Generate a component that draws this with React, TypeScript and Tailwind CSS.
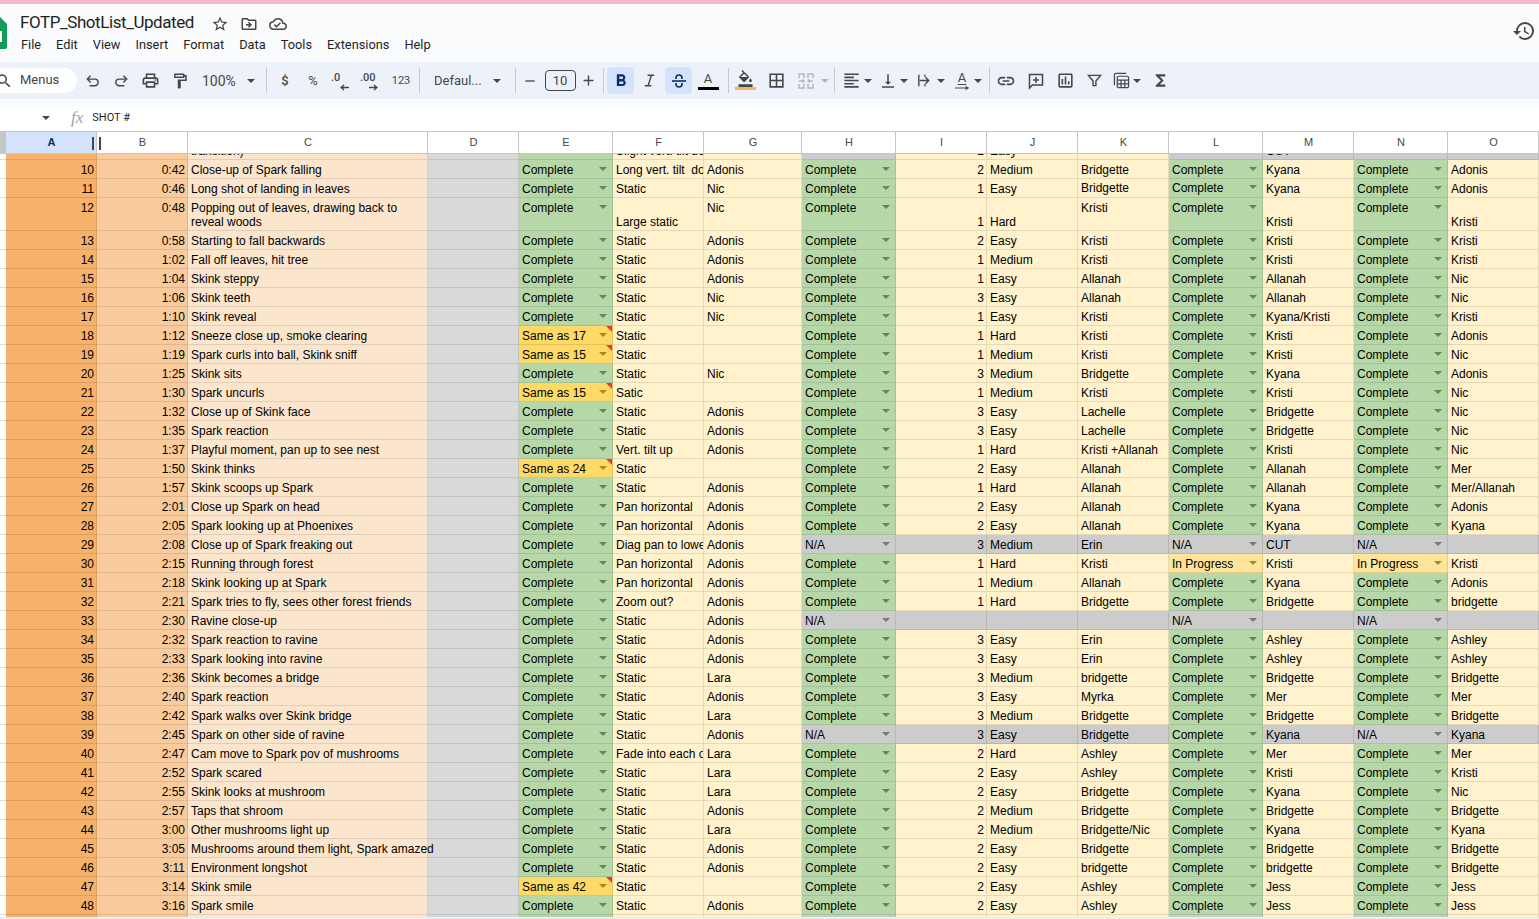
import React from 'react';
import {
  MdOutlinePrint, MdOutlineFormatPaint, MdFormatBold,
  MdFormatColorFill, MdBorderAll, MdFormatAlignLeft, MdVerticalAlignBottom, MdInsertLink,
  MdOutlineInsertChart, MdFunctions, MdHistory, MdOutlineDriveFileMove, MdOutlineCloudDone, MdStarBorder,
  MdSearch, MdAdd, MdRemove,
} from 'react-icons/md';

const COLS = 'grid grid-cols-[6px_91px_91px_240px_91px_94px_91px_98px_94px_91px_91px_91px_94px_91px_94px_91px]';
const RAW = `10|0:42|Close-up of Spark falling|C|Long vert. tilt  do|Adonis|C|2|Medium|Bridgette|C|Kyana|C|Adonis
11|0:46|Long shot of landing in leaves|C|Static|Nic|C|1|Easy|Bridgette|C|Kyana|C|Adonis
12|0:48|Popping out of leaves, drawing back to reveal woods|C|Large static|Nic|C|1|Hard|Kristi|C|Kristi|C|Kristi
13|0:58|Starting to fall backwards|C|Static|Adonis|C|2|Easy|Kristi|C|Kristi|C|Kristi
14|1:02|Fall off leaves, hit tree|C|Static|Adonis|C|1|Medium|Kristi|C|Kristi|C|Kristi
15|1:04|Skink steppy|C|Static|Adonis|C|1|Easy|Allanah|C|Allanah|C|Nic
16|1:06|Skink teeth|C|Static|Nic|C|3|Easy|Allanah|C|Allanah|C|Nic
17|1:10|Skink reveal|C|Static|Nic|C|1|Easy|Kristi|C|Kyana/Kristi|C|Kristi
18|1:12|Sneeze close up, smoke clearing|Same as 17|Static||C|1|Hard|Kristi|C|Kristi|C|Adonis
19|1:19|Spark curls into ball, Skink sniff|Same as 15|Static||C|1|Medium|Kristi|C|Kristi|C|Nic
20|1:25|Skink sits|C|Static|Nic|C|3|Medium|Bridgette|C|Kyana|C|Adonis
21|1:30|Spark uncurls|Same as 15|Satic||C|1|Medium|Kristi|C|Kristi|C|Nic
22|1:32|Close up of Skink face|C|Static|Adonis|C|3|Easy|Lachelle|C|Bridgette|C|Nic
23|1:35|Spark reaction|C|Static|Adonis|C|3|Easy|Lachelle|C|Bridgette|C|Nic
24|1:37|Playful moment, pan up to see nest|C|Vert. tilt up|Adonis|C|1|Hard|Kristi +Allanah|C|Kristi|C|Nic
25|1:50|Skink thinks|Same as 24|Static||C|2|Easy|Allanah|C|Allanah|C|Mer
26|1:57|Skink scoops up Spark|C|Static|Adonis|C|1|Hard|Allanah|C|Allanah|C|Mer/Allanah
27|2:01|Close up Spark on head|C|Pan horizontal|Adonis|C|2|Easy|Allanah|C|Kyana|C|Adonis
28|2:05|Spark looking up at Phoenixes|C|Pan horizontal|Adonis|C|2|Easy|Allanah|C|Kyana|C|Kyana
29|2:08|Close up of Spark freaking out|C|Diag pan to lowe|Adonis|N/A|3|Medium|Erin|N/A|CUT|N/A|
30|2:15|Running through forest|C|Pan horizontal|Adonis|C|1|Hard|Kristi|In Progress|Kristi|In Progress|Kristi
31|2:18|Skink looking up at Spark|C|Pan horizontal|Adonis|C|1|Medium|Allanah|C|Kyana|C|Adonis
32|2:21|Spark tries to fly, sees other forest friends|C|Zoom out?|Adonis|C|1|Hard|Bridgette|C|Bridgette|C|bridgette
33|2:30|Ravine close-up|C|Static|Adonis|N/A||||N/A||N/A|
34|2:32|Spark reaction to ravine|C|Static|Adonis|C|3|Easy|Erin|C|Ashley|C|Ashley
35|2:33|Spark looking into ravine|C|Static|Adonis|C|3|Easy|Erin|C|Ashley|C|Ashley
36|2:36|Skink becomes a bridge|C|Static|Lara|C|3|Medium|bridgette|C|Bridgette|C|Bridgette
37|2:40|Spark reaction|C|Static|Adonis|C|3|Easy|Myrka|C|Mer|C|Mer
38|2:42|Spark walks over Skink bridge|C|Static|Lara|C|3|Medium|Bridgette|C|Bridgette|C|Bridgette
39|2:45|Spark on other side of ravine|C|Static|Adonis|N/A|3|Easy|Bridgette|C|Kyana|N/A|Kyana
40|2:47|Cam move to Spark pov of mushrooms|C|Fade into each o|Lara|C|2|Hard|Ashley|C|Mer|C|Mer
41|2:52|Spark scared|C|Static|Lara|C|2|Easy|Ashley|C|Kristi|C|Kristi
42|2:55|Skink looks at mushroom|C|Static|Lara|C|2|Easy|Bridgette|C|Kyana|C|Nic
43|2:57|Taps that shroom|C|Static|Adonis|C|2|Medium|Bridgette|C|Bridgette|C|Bridgette
44|3:00|Other mushrooms light up|C|Static|Lara|C|2|Medium|Bridgette/Nic|C|Kyana|C|Kyana
45|3:05|Mushrooms around them light, Spark amazed|C|Static|Adonis|C|2|Easy|Bridgette|C|Bridgette|C|Bridgette
46|3:11|Environment longshot|C|Static|Adonis|C|2|Easy|bridgette|C|bridgette|C|Bridgette
47|3:14|Skink smile|Same as 42|Static||C|2|Easy|Ashley|C|Jess|C|Jess
48|3:16|Spark smile|C|Static|Adonis|C|2|Easy|Ashley|C|Jess|C|Jess`;

const rows = RAW.split('\n').map((l) => l.split('|'));
const MENU = ['File', 'Edit', 'View', 'Insert', 'Format', 'Data', 'Tools', 'Extensions', 'Help'];
const HEAD = ['A', 'B', 'C', 'D', 'E', 'F', 'G', 'H', 'I', 'J', 'K', 'L', 'M', 'N', 'O'];

function Caret({ cls = 'w-[8px]' }: { cls?: string }) {
  return (
    <div className={`${cls} h-[20px] shrink-0 flex items-center justify-center`}>
      <div className="w-0 h-0 shrink-0 border-x-[4px] border-x-transparent border-t-[4px] border-t-[#444746]" />
    </div>
  );
}
function Sep({ cls }: { cls: string }) {
  return (
    <div className={`${cls} h-[25px] shrink-0 flex items-center justify-center`}>
      <div className="w-px h-[25px] bg-[#c7c7c7] shrink-0" />
    </div>
  );
}
function Tool({ cls, children }: { cls: string; children: React.ReactNode }) {
  return <div className={`${cls} h-[27px] shrink-0 flex items-center justify-center text-[#444746]`}>{children}</div>;
}

function Logo() {
  return (
    <svg viewBox="0 0 24 33" className="w-[24px] h-[33px] -ml-[17px] mr-[13px] shrink-0">
      <path d="M2 0h14l8 8v23a2 2 0 0 1-2 2H2a2 2 0 0 1-2-2V2a2 2 0 0 1 2-2z" fill="#0f9d58" />
      <path d="M5 15h14v11H5z" fill="#fff" />
      <path d="M7 17h4v2.500H7zM13 17h4v2.500h-4zM7 21.500h4V24H7zM13 21.500h4V24h-4z" fill="#0f9d58" />
    </svg>
  );
}

function DecIcon({ label, right }: { label: string; right?: boolean }) {
  return (
    <div className="relative w-[22px] h-[20px] text-[#444746]">
      <span className="absolute left-0 top-[1px] text-[11px] font-medium leading-[12px]">{label}</span>
      <svg viewBox="0 0 12 8" className={`absolute top-[13px] w-[10px] h-[7px] ${right ? 'left-[9px]' : 'left-[8px]'}`}>
        {right ? (
          <path d="M0 4h9M6 1l3.500 3L6 7" fill="none" stroke="currentColor" strokeWidth="1.600" />
        ) : (
          <path d="M12 4H3M6 1L2.500 4 6 7" fill="none" stroke="currentColor" strokeWidth="1.600" />
        )}
      </svg>
    </div>
  );
}

function Toolbar() {
  return (
    <div className="h-[37px] bg-[#edf2fa] flex items-center overflow-hidden font-['Roboto',sans-serif] shrink-0">
      <div className="w-[77px] h-[25px] bg-white rounded-r-full shrink-0 flex items-center text-[13px] text-[#444746]">
        <MdSearch className="w-[18px] h-[18px] -ml-[5px] mr-[7px] shrink-0" />
        <span className="-mt-[1px]">Menus</span>
      </div>
      <div className="w-px shrink-0" />
      <Tool cls="w-[29px]">
        <svg viewBox="0 0 18 18" className="w-[17px] h-[17px]" fill="none" stroke="currentColor" strokeWidth="1.500">
          <path d="M4 7.500h7.500a3.500 3.500 0 0 1 0 7H6" />
          <path d="M7 4 3.500 7.500 7 11" />
        </svg>
      </Tool>
      <Tool cls="w-[29px]">
        <svg viewBox="0 0 18 18" className="w-[17px] h-[17px]" fill="none" stroke="currentColor" strokeWidth="1.500">
          <path d="M14 7.500H6.500a3.500 3.500 0 0 0 0 7H12" />
          <path d="M11 4l3.500 3.500L11 11" />
        </svg>
      </Tool>
      <Tool cls="w-[29px]"><MdOutlinePrint size={19} /></Tool>
      <Tool cls="w-[29px]"><MdOutlineFormatPaint size={18} /></Tool>
      <div className="w-[64px] h-[27px] shrink-0 flex items-center justify-between pl-[8px] pr-[3px] text-[14px] text-[#444746]">
        <span>100%</span><Caret />
      </div>
      <Sep cls="w-[16px]" />
      <Tool cls="w-[22px]"><span className="text-[13px] font-medium">$</span></Tool>
      <Tool cls="w-[34px]"><span className="text-[13px]">%</span></Tool>
      <Tool cls="w-[24px]"><DecIcon label=".0" /></Tool>
      <Tool cls="w-[34px]"><DecIcon label=".00" right /></Tool>
      <Tool cls="w-[26px]"><span className="text-[11px]">123</span></Tool>
      <Sep cls="w-[10px]" />
      <div className="w-[84px] h-[27px] shrink-0 flex items-center justify-between pl-[10px] pr-[7px] text-[13px] text-[#444746]">
        <span>Defaul...</span><Caret />
      </div>
      <Sep cls="w-[14px]" />
      <Tool cls="w-[16px]"><MdRemove size={16} /></Tool>
      <div className="w-[44px] shrink-0 flex justify-center">
        <div className="w-[31px] h-[21px] rounded-[4px] border border-[#444746] flex items-center justify-center text-[13px] text-[#444746]">10</div>
      </div>
      <Tool cls="w-[12px]"><MdAdd size={17} className="shrink-0" /></Tool>
      <div className="w-[13px] h-[25px] shrink-0 pl-[9px]"><div className="w-px h-[25px] bg-[#c7c7c7]" /></div>
      <div className="w-[27px] h-[27px] shrink-0 rounded-[4px] bg-[#d3e3fd] flex items-center justify-center text-[#0b2f66]"><MdFormatBold size={20} /></div>
      <Tool cls="w-[31px]">
        <svg viewBox="0 0 18 18" className="w-[17px] h-[17px]" fill="none" stroke="currentColor" strokeWidth="1.500">
          <path d="M7 3.500h7M4 14.500h7M11 3.500 7.500 14.500" />
        </svg>
      </Tool>
      <div className="w-[27px] h-[27px] shrink-0 rounded-[4px] bg-[#d3e3fd] flex items-center justify-center text-[#0b2f66]">
        <svg viewBox="0 0 20 20" className="w-[20px] h-[20px]" fill="none" stroke="currentColor" strokeWidth="1.600">
          <path d="M3 10h14" />
          <path d="M7 8V7a3 3 0 0 1 6 0v1M7 12v1a3 3 0 0 0 6 0v-1" />
        </svg>
      </div>
      <Tool cls="w-[32px]">
        <div className="flex flex-col items-center">
          <span className="text-[13px] leading-[14px]">A</span>
          <div className="w-[21px] h-[3px] bg-black mt-[1px]" />
        </div>
      </Tool>
      <Sep cls="w-[8px]" />
      <Tool cls="w-[26px]">
        <div className="flex flex-col items-center">
          <MdFormatColorFill size={17} className="-mt-[1px]" />
          <div className="w-[21px] h-[3px] bg-[#f6b26b]" />
        </div>
      </Tool>
      <Tool cls="w-[36px]"><MdBorderAll size={19} /></Tool>
      <Tool cls="w-[24px]">
        <svg viewBox="0 0 18 18" className="w-[18px] h-[18px]" fill="none" stroke="#b4b8bb" strokeWidth="1.500">
          <path d="M2 6V2h5v4M2 12v4h5v-4M11 6V2h5v4M11 12v4h5v-4" />
          <path d="M2 9h5M5.500 7.500 7 9l-1.500 1.500M16 9h-5M12.500 7.500 11 9l1.500 1.500" />
        </svg>
      </Tool>
      <div className="w-[14px] shrink-0 flex justify-center"><div className="w-0 h-0 border-x-[4px] border-x-transparent border-t-[4px] border-t-[#b4b8bb]" /></div>
      <Sep cls="w-[5px]" />
      <Tool cls="w-[28px]"><MdFormatAlignLeft size={19} /></Tool>
      <Caret cls="w-[6px]" />
      <Tool cls="w-[24px] ml-[5px]"><MdVerticalAlignBottom size={18} /></Tool>
      <Caret />
      <Tool cls="w-[24px] ml-[4px]">
        <svg viewBox="0 0 18 18" className="w-[17px] h-[17px]" fill="none" stroke="currentColor" strokeWidth="1.500">
          <path d="M3 3v12M4 9h10M10 5.500 13.500 9 10 12.500" />
          <path d="M9.500 3v2M9.500 13v2" />
        </svg>
      </Tool>
      <Caret cls="w-[10px]" />
      <Tool cls="w-[24px] ml-[4px]">
        <div className="flex flex-col items-center">
          <span className="text-[13px] leading-[12px] underline underline-offset-2">A</span>
          <svg viewBox="0 0 16 4" className="w-[16px] h-[4px] mt-[2px]" fill="none" stroke="currentColor" strokeWidth="1.200"><path d="M1 2h13M11.500 .5 14 2l-2.500 1.500" /></svg>
        </div>
      </Tool>
      <Caret />
      <Sep cls="w-[14px]" />
      <Tool cls="w-[20px]"><MdInsertLink size={20} className="shrink-0" /></Tool>
      <Tool cls="w-[40px]">
        <svg viewBox="0 0 18 18" className="w-[18px] h-[18px]" fill="none" stroke="currentColor" strokeWidth="1.500">
          <path d="M2.500 2.500h13v10.500H5.500l-3 3zM9 5v6M6 8h6" />
        </svg>
      </Tool>
      <Tool cls="w-[18px]"><MdOutlineInsertChart size={19} className="shrink-0" /></Tool>
      <Tool cls="w-[40px]">
        <svg viewBox="0 0 16 16" className="w-[15px] h-[15px]" fill="none" stroke="currentColor" strokeWidth="1.500"><path d="M1.500 2.500h13L9.500 8.500v5h-3v-5z" /></svg>
      </Tool>
      <Tool cls="w-[14px]">
        <svg viewBox="0 0 18 18" className="w-[17px] h-[17px] shrink-0" fill="none" stroke="currentColor" strokeWidth="1.300">
          <path d="M14 1.500H3A1.500 1.500 0 0 0 1.500 3v11" />
          <rect x="4.500" y="4.500" width="12" height="12" rx="1.500" />
          <path d="M4.500 8.500h12M8.500 8.500v8M12.500 8.500v8M4.500 12.500h12" />
        </svg>
      </Tool>
      <Caret cls="w-[18px]" />
      <Tool cls="w-[28px]"><MdFunctions size={19} /></Tool>
    </div>
  );
}

function Tri({ color }: { color: string }) {
  return <div className={`w-0 h-0 shrink-0 border-x-[4px] border-x-transparent border-t-[4px] ${color} mt-[4px] mr-[5px]`} />;
}

function Chip({ v, top }: { v: string; top?: boolean }) {
  const same = v.startsWith('Same');
  const full = v === 'C' ? 'Complete' : v;
  const bg = v === 'C' ? 'bg-[#b6d7a8]' : same ? 'bg-[#ffd966]' : v === 'N/A' ? 'bg-[#cccccc]' : 'bg-[#ffe599]';
  const tri = v === 'C' ? 'border-t-[#5b8f45]' : v === 'N/A' ? 'border-t-[#777777]' : 'border-t-[#a98a1c]';
  return (
    <div className={`relative flex justify-between items-start ${top ? 'pt-[2px]' : 'pt-[3px]'} pl-[3px] border-r border-b border-black/10 ${bg}`}>
      <span>{full}</span>
      <Tri color={tri} />
      {same && <div className="absolute top-0 right-0 w-0 h-0 border-l-[6px] border-l-transparent border-t-[6px] border-t-[#ea3a2d]" />}
    </div>
  );
}

function Text({ v, bg, right, bottom, top, cls = '' }: { v: string; bg: string; right?: boolean; bottom?: boolean; top?: boolean; cls?: string }) {
  return (
    <div className={`flex overflow-hidden whitespace-pre border-r border-b border-black/10 ${bg} ${right ? 'justify-end pr-[2px]' : 'pl-[3px]'} ${bottom ? 'items-end pb-[1px]' : top ? 'pt-[2px]' : 'pt-[3px]'} ${cls}`}>
      <span>{v}</span>
    </div>
  );
}

function Row({ r }: { r: string[] }) {
  const [n, t, c, e, f, g, h, i, j, k, l, m, nn, o] = r;
  const num = +n;
  const tall = num === 12;
  const gray = num === 29 || num === 33 || num === 39;
  const rowBg = gray ? 'bg-[#cccccc]' : 'bg-[#fff2cc]';
  const raise = num === 11;
  return (
    <div className={`${COLS} shrink-0 ${tall ? 'h-[33px]' : 'h-[19px]'}`}>
      <div className="bg-white border-b border-[#dadce0]" />
      <Text v={n} bg="bg-[#f6b26b]" right />
      <Text v={t} bg="bg-[#f9cb9c]" right />
      {tall ? (
        <div className="pl-[3px] pt-[3px] bg-[#fce5cd] border-r border-b border-black/10 leading-[14px]">Popping out of leaves, drawing back to<br />reveal woods</div>
      ) : (
        <Text v={c} bg="bg-[#fce5cd]" cls={num === 45 ? 'relative z-10 !overflow-visible' : ''} />
      )}
      <div className="bg-[#d9d9d9] border-r border-b border-black/10" />
      <Chip v={e} />
      <Text v={f} bg="bg-[#fff2cc]" bottom={tall} />
      <Text v={g} bg="bg-[#fff2cc]" />
      <Chip v={h} />
      <Text v={i} bg={rowBg} right bottom={tall} />
      <Text v={j} bg={rowBg} bottom={tall} />
      <Text v={k} bg={rowBg} top={raise} />
      <Chip v={l} top={raise} />
      <Text v={m} bg={rowBg} bottom={tall} />
      <Chip v={nn} />
      <Text v={o} bg={rowBg} bottom={tall} />
    </div>
  );
}

function PartialRow() {
  const cells: [string, string][] = [
    ['', 'bg-[#f6b26b]'], ['', 'bg-[#f9cb9c]'], ['transition)', 'bg-[#fce5cd]'], ['', 'bg-[#d9d9d9]'], ['', 'bg-[#b6d7a8]'],
    ['Slight vert. tilt do', 'bg-[#fff2cc]'], ['', 'bg-[#fff2cc]'], ['', 'bg-[#cccccc]'], ['2', 'bg-[#fff2cc]'], ['Easy', 'bg-[#fff2cc]'],
    ['', 'bg-[#fff2cc]'], ['', 'bg-[#cccccc]'], ['CUT', 'bg-[#cccccc]'], ['', 'bg-[#cccccc]'], ['', 'bg-[#cccccc]'],
  ];
  return (
    <div className={`${COLS} h-[6px] shrink-0`}>
      <div className="bg-white border-b border-[#dadce0]" />
      {cells.map(([v, bg], idx) => (
        <div key={idx} className={`flex items-end overflow-hidden whitespace-pre border-r border-b border-black/10 pb-[1px] ${bg} ${idx === 8 ? 'justify-end pr-[2px]' : 'pl-[3px]'}`}>
          <span className="shrink-0">{v}</span>
        </div>
      ))}
    </div>
  );
}

function EndRow() {
  const bgs = ['bg-[#f6b26b]', 'bg-[#f9cb9c]', 'bg-[#fce5cd]', 'bg-[#d9d9d9]', 'bg-[#b6d7a8]', 'bg-[#fff2cc]', 'bg-[#fff2cc]', 'bg-[#cccccc]', 'bg-[#fff2cc]', 'bg-[#fff2cc]', 'bg-[#fff2cc]', 'bg-[#cccccc]', 'bg-[#fff2cc]', 'bg-[#cccccc]', 'bg-[#fff2cc]'];
  return (
    <div className={`${COLS} h-[2px] shrink-0`}>
      <div className="bg-white" />
      {bgs.map((bg, i) => <div key={i} className={`${bg} border-r border-black/10`} />)}
    </div>
  );
}

export default function App() {
  return (
    <div className="w-[1539px] h-[919px] overflow-hidden bg-white flex flex-col font-['Liberation_Sans',Arial,sans-serif] text-[12px] leading-[14px] text-black">
      <div className="h-[4px] bg-[#f8b8d0] shrink-0" />
      <div className="h-[58px] bg-[#f9fbfd] flex items-start shrink-0 pt-[8px] font-['Roboto',sans-serif]">
        <div className="pt-[4px]"><Logo /></div>
        <div className="flex-1">
          <div className="flex items-center h-[21px] text-[#1f1f1f]">
            <span className="text-[17px] leading-[21px] w-[174px] whitespace-nowrap tracking-[-0.43px]">FOTP_ShotList_Updated</span>
            <div className="flex items-center gap-[11px] ml-[17px] text-[#444746] mt-[2px]">
              <MdStarBorder size={18} />
              <MdOutlineDriveFileMove size={18} />
              <MdOutlineCloudDone size={18} />
            </div>
          </div>
          <div className="flex gap-[15px] mt-[4px] text-[12.800px] leading-[16px] text-[#1f1f1f] pl-[1px]">
            {MENU.map((m) => <span key={m}>{m}</span>)}
          </div>
        </div>
        <div className="pr-[3px] pt-[7px] text-[#444746]"><MdHistory size={24} /></div>
      </div>
      <Toolbar />
      <div className="h-[7px] bg-[#f9fbfd] shrink-0" />
      <div className="h-[25px] bg-white shrink-0 flex items-center pb-[2px] text-[11px] font-['Roboto',sans-serif] text-[#1f1f1f]">
        <div className="ml-[42px] w-0 h-0 border-x-[4px] border-x-transparent border-t-[4px] border-t-[#444746]" />
        <span className="ml-[21px] font-['Liberation_Serif',serif] italic text-[17px] text-[#a0a3a6]">fx</span>
        <span className="ml-[9px]">SHOT #</span>
      </div>
      <div className={`${COLS} h-[23px] shrink-0 border-y border-[#c4c7c5] text-[11px] leading-[21px] text-[#444746] text-center bg-white`}>
        <div className="bg-[#c4c7c5]" />
        {HEAD.map((h, i) => (
          <div key={h} className={`relative border-r border-[#c4c7c5] pl-[1px] ${i === 0 ? 'bg-[#d3e3fd] font-bold text-[#0b2f66]' : ''}`}>
            {h}
            {i === 0 && <div className="absolute right-[2px] top-[5px] w-[2px] h-[13px] bg-[#444746]" />}
            {i === 1 && <div className="absolute left-[2px] top-[5px] w-[2px] h-[13px] bg-[#444746]" />}
          </div>
        ))}
      </div>
      <PartialRow />
      {rows.map((r) => <Row key={r[0]} r={r} />)}
      <EndRow />
      <div className="flex-1 bg-[#eceff1]" />
    </div>
  );
}
